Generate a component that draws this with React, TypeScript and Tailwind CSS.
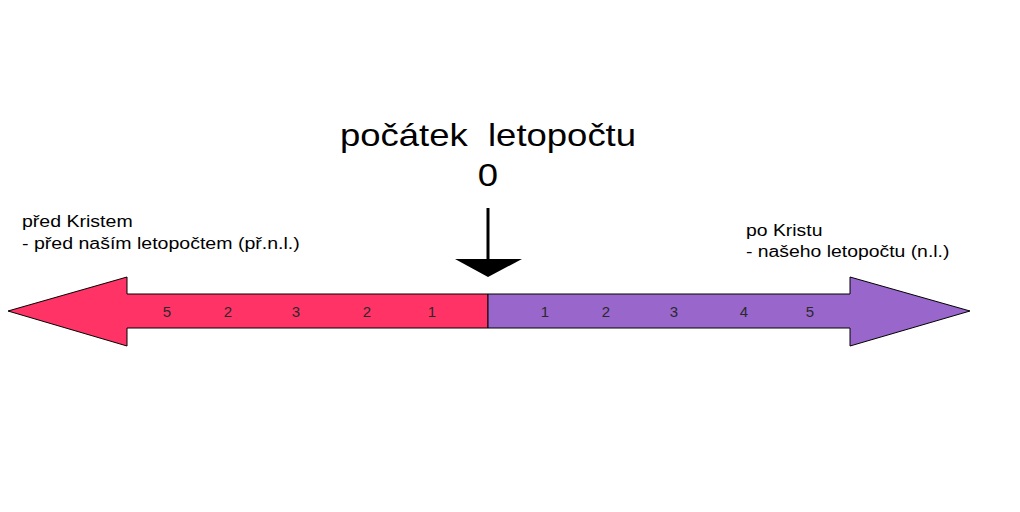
const LEFT_NUMS = [
  { n: "5", x: 167 },
  { n: "2", x: 228 },
  { n: "3", x: 296 },
  { n: "2", x: 367 },
  { n: "1", x: 432 },
];

const RIGHT_NUMS = [
  { n: "1", x: 545 },
  { n: "2", x: 606 },
  { n: "3", x: 674 },
  { n: "4", x: 744 },
  { n: "5", x: 810 },
];

const FONT = "font-['Liberation_Sans',Arial,sans-serif]";

function Timeline() {
  return (
    <svg className="absolute inset-0" width={1020} height={512} viewBox="0 0 1020 512">
      {/* before Christ */}
      <polygon
        points="8,311 127,277 127,294 488,294 488,328 127,328 127,346"
        fill="#ff3366"
        stroke="#000"
        strokeWidth={1}
      />
      {/* after Christ */}
      <polygon
        points="488,294 850,294 850,277 970,311 850,346 850,328 488,328"
        fill="#9966cc"
        stroke="#000"
        strokeWidth={1}
      />
      {/* pointer */}
      <line x1={488} y1={208} x2={488} y2={262} stroke="#000" strokeWidth={3} />
      <polygon points="455,259 522,259 488,277" fill="#000" />
    </svg>
  );
}

export default function App() {
  return (
    <div className={`relative h-[512px] w-[1020px] overflow-hidden bg-white text-black ${FONT}`}>
      <Timeline />

      <div className="absolute left-[288px] top-[119px] flex w-[400px] origin-center scale-x-[1.14] flex-col items-center text-[32px] leading-none">
        <span className="whitespace-pre">počátek  letopočtu</span>
        <span className="mt-[8px]">0</span>
      </div>

      <div className="absolute left-[22px] top-[211px] origin-left scale-x-[1.22] text-[16px] leading-[22px]">
        <p>před Kristem</p>
        <p>- před naším letopočtem (př.n.l.)</p>
      </div>

      <div className="absolute left-[746px] top-[220px] origin-left scale-x-[1.21] text-[16px] leading-[21px]">
        <p>po Kristu</p>
        <p>- našeho letopočtu (n.l.)</p>
      </div>

      {[...LEFT_NUMS, ...RIGHT_NUMS].map((d, i) => (
        <span
          key={i}
          className="absolute top-[304px] -translate-x-1/2 text-[15px] leading-none text-[#2a2a2a]"
          style={{ left: d.x }}
        >
          {d.n}
        </span>
      ))}
    </div>
  );
}
